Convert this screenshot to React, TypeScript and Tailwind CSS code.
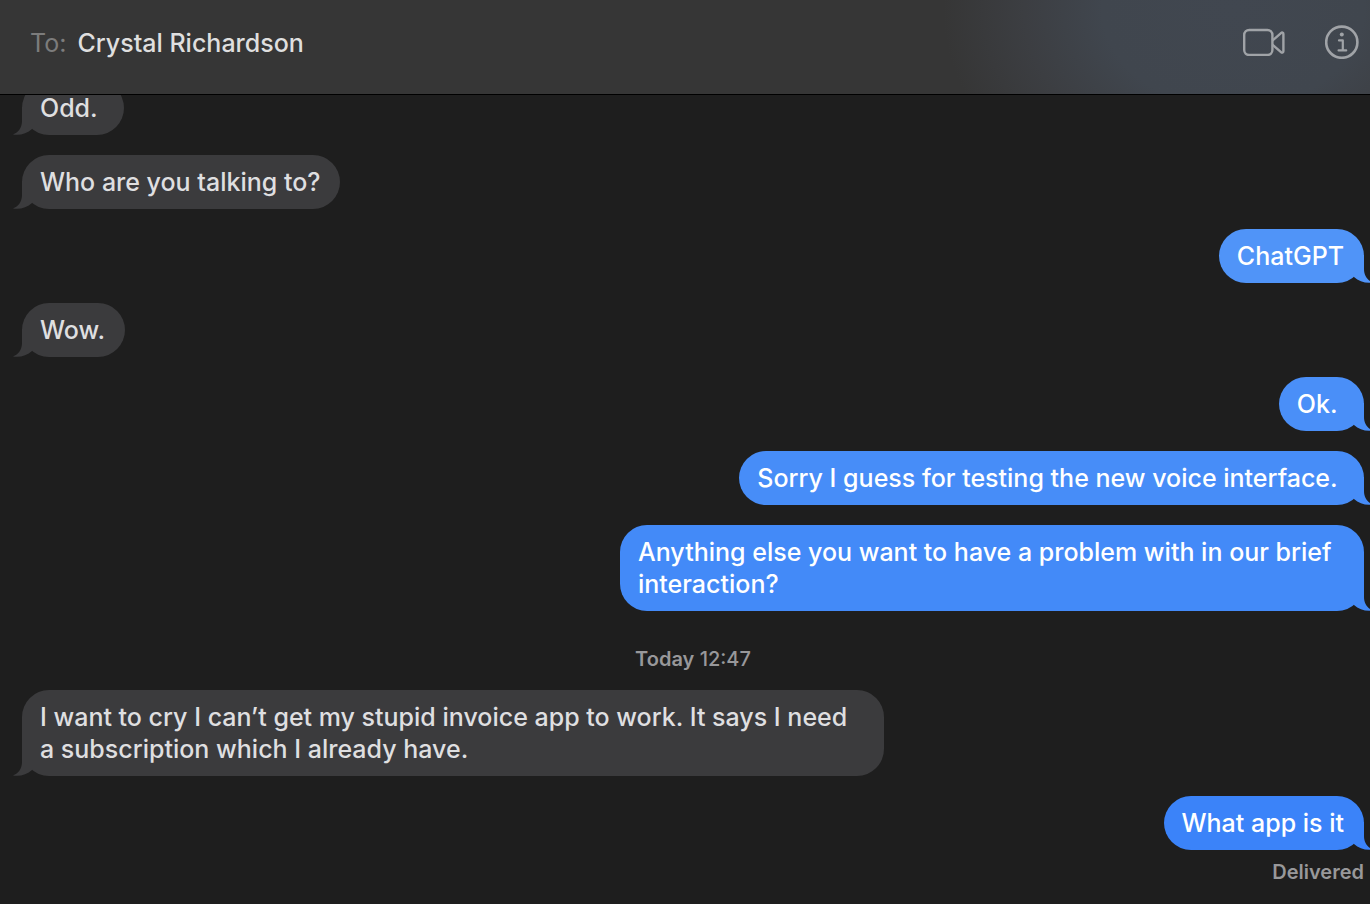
import { clsx } from "clsx";

type Message = {
  text: string;
  mine?: boolean;
  tone?: string;
  time?: string;
};

const messages: Message[] = [
  { text: "Odd. " },
  { text: "Who are you talking to?" },
  { text: "ChatGPT", mine: true, tone: "bg-[#5094f8] text-[#5094f8]" },
  { text: "Wow." },
  { text: "Ok. ", mine: true, tone: "bg-[#4a8ff8] text-[#4a8ff8]" },
  {
    text: "Sorry I guess for testing the new voice interface. ",
    mine: true,
    tone: "bg-[#478df8] text-[#478df8]",
  },
  {
    text: "Anything else you want to have a problem with in our brief interaction?",
    mine: true,
    tone: "bg-[#438af8] text-[#438af8]",
  },
  {
    text: "I want to cry I can’t get my stupid invoice app to work. It says I need a subscription which I already have.",
    time: "Today 12:47",
  },
  { text: "What app is it", mine: true, tone: "bg-[#3b83f9] text-[#3b83f9]" },
];

function Tail({ mine }: { mine?: boolean }) {
  return (
    <svg
      aria-hidden="true"
      viewBox="0 0 20 28"
      className={clsx(
        "absolute bottom-0 h-7 w-5",
        mine ? "-right-[9px] -scale-x-100" : "-left-[9px]",
      )}
    >
      <path
        fill="currentColor"
        d="M9 0V14C9 20.5 5.5 25.5 0 27.5C7 28.8 14 26.5 19 22V0Z"
      />
    </svg>
  );
}

function Bubble({ message }: { message: Message }) {
  const { text, mine, tone } = message;
  return (
    <div
      className={clsx(
        "relative rounded-[27px] py-[11px] pr-5 pl-[18px]",
        mine
          ? "max-w-[744px] self-end"
          : "max-w-[862px] self-start bg-[#3b3b3d] text-[#3b3b3d]",
        tone,
      )}
    >
      <Tail mine={mine} />
      <p
        className={clsx(
          "relative text-[25px] leading-8 font-medium whitespace-pre-wrap",
          mine ? "text-white" : "text-[#dfdfe0]",
        )}
      >
        {text}
      </p>
    </div>
  );
}

function VideoIcon() {
  return (
    <svg
      viewBox="0 0 42 28"
      className="h-7 w-[42px]"
      fill="none"
      stroke="currentColor"
      strokeWidth="2.4"
      strokeLinejoin="round"
      aria-hidden="true"
    >
      <rect x="1.2" y="2" width="28.2" height="25" rx="5" />
      <path d="M29.4 12.6L38 5.1C39 4.2 40.4 4.500 40.400 5.900V23.300C40.400 24.700 39 25 38 24.100L29.400 16.600" />
    </svg>
  );
}

function InfoIcon() {
  return (
    <svg
      viewBox="0 0 34 34"
      className="size-[34px]"
      fill="none"
      stroke="currentColor"
      strokeLinecap="round"
      strokeLinejoin="round"
      aria-hidden="true"
    >
      <circle cx="16.8" cy="17.2" r="15.6" strokeWidth="2.6" />
      <circle cx="16.8" cy="9.6" r="2" fill="currentColor" stroke="none" />
      <path d="M14 15.4H17.8V25M13.6 25.400H21.200" strokeWidth="2.200" />
    </svg>
  );
}

export default function App() {
  return (
    <div className="flex h-screen flex-col overflow-hidden bg-[#1e1e1e] font-['Inter',sans-serif]">
      <header className="flex h-[95px] shrink-0 items-start justify-between border-b border-black bg-[#363636] bg-[radial-gradient(ellipse_290px_220px_at_90%_10%,#414750_0%,#40464e_45%,#3c3e42_72%,#363636_100%)] pr-[11px] pl-[30px]">
        <h1 className="flex gap-[11px] pt-[27px] text-[25px] leading-8 font-medium text-[#dfdfdf]">
          <span className="font-normal text-[#7c7c7c]">To:</span>
          <span>Crystal Richardson</span>
        </h1>
        <div className="flex items-center gap-10 pt-[25px] text-[#a0a3a7]">
          <button type="button" aria-label="Start video call">
            <VideoIcon />
          </button>
          <button type="button" aria-label="Conversation details">
            <InfoIcon />
          </button>
        </div>
      </header>
      <main className="flex min-h-0 flex-1 flex-col justify-end overflow-hidden pr-1.5 pb-5 pl-[22px]">
        <ol className="flex flex-col gap-5">
          {messages.map((message) => (
            <li key={message.text} className="flex flex-col">
              {message.time && (
                <time className="mt-4 mb-[19px] self-center text-[20px] leading-6 font-medium text-[#98989a]">
                  <span className="font-semibold">Today</span> 12:47
                </time>
              )}
              <Bubble message={message} />
            </li>
          ))}
        </ol>
        <p className="mt-2.5 self-end text-[20px] leading-6 font-semibold text-[#98989a]">
          Delivered
        </p>
      </main>
    </div>
  );
}
